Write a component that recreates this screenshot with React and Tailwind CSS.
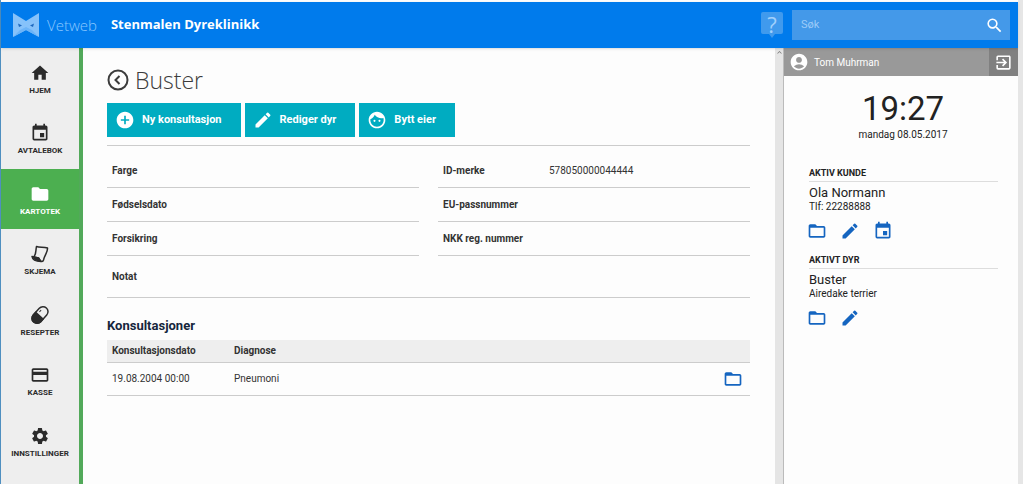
import {
  MdHome,
  MdEvent,
  MdFolder,
  MdFolderOpen,
  MdCreditCard,
  MdSettings,
  MdEdit,
  MdAddCircle,
  MdSearch,
  MdAccountCircle,
  MdExitToApp,
  MdKeyboardArrowUp,
} from 'react-icons/md';

function Logo() {
  return (
    <svg viewBox="0 0 26 24" className="h-6 w-[26px]">
      <path d="M0 0 L13 8 L26 0 V24 L13 17 L0 24 Z" fill="#86c2fa" />
      <path d="M0 24 L13 17 L26 24 L19 17 L13 14 L7 17 Z" fill="#6cb4f8" />
      <path d="M5 10.500 L9 12.500 L6 14 Z M21 10.500 L17 12.500 L20 14 Z" fill="#1d68bf" />
    </svg>
  );
}

function FormIcon({ size }) {
  return (
    <svg viewBox="0 0 20 20" width={size} height={size} fill="none" stroke="currentColor" strokeWidth="1.500" strokeLinejoin="round">
      <path d="M6.500 2.500 C9.500 4 13.500 2.500 17.500 4 C18 8 14.500 11 13.500 16 C13 18 11 18 10 16.500 L8.500 14 L3.500 13 C6.500 10.500 5.500 6.500 6.500 2.500 Z" />
      <path d="M2 12.500 L8.500 14 L11 17.500 C7 17.500 2.500 16 2 12.500 Z" fill="currentColor" />
    </svg>
  );
}

function PillIcon({ size }) {
  return (
    <svg viewBox="0 0 20 20" width={size} height={size} fill="none" stroke="currentColor" strokeWidth="1.500">
      <g transform="rotate(42 10 10)">
        <rect x="5" y="0.500" width="10" height="19" rx="5" />
        <path d="M5 11 H15 V14.500 A5 5 0 0 1 5 14.500 Z" fill="currentColor" />
        <path d="M7.500 8 V5.500" strokeWidth="1" />
      </g>
    </svg>
  );
}

function FaceIcon() {
  return (
    <svg viewBox="0 0 24 24" width="20" height="20" fill="currentColor">
      <circle cx="9" cy="13" r="1.250" />
      <circle cx="15" cy="13" r="1.250" />
      <path d="M12 2C6.480 2 2 6.480 2 12s4.480 10 10 10 10-4.480 10-10S17.520 2 12 2zm0 18c-4.410 0-8-3.590-8-8 0-.290.020-.580.050-.860 2.360-1.050 4.230-2.980 5.210-5.370C11.070 8.330 14.050 10 17.420 10c.780 0 1.530-.090 2.250-.260.210.710.330 1.470.330 2.260 0 4.410-3.590 8-8 8z" />
    </svg>
  );
}

const menu = [
  { label: 'HJEM', icon: MdHome },
  { label: 'AVTALEBOK', icon: MdEvent },
  { label: 'KARTOTEK', icon: MdFolder, active: true },
  { label: 'SKJEMA', icon: FormIcon },
  { label: 'RESEPTER', icon: PillIcon },
  { label: 'KASSE', icon: MdCreditCard },
  { label: 'INNSTILLINGER', icon: MdSettings },
];

function Header() {
  return (
    <header className="z-10 flex h-[46px] shrink-0 items-center bg-[#007bec] pl-3 pr-2 text-white shadow">
      <Logo />
      <span className="ml-2 font-['Open_Sans',sans-serif] text-[15px] font-light text-[#8cc8ff]">Vetweb</span>
      <span className="ml-3.5 font-['Open_Sans',sans-serif] text-[13px] font-bold">Stenmalen Dyreklinikk</span>
      <button type="button" aria-label="Hjelp" className="relative ml-auto flex h-[26px] w-[22px] justify-center text-[#a0d0fc]">
        <svg viewBox="0 0 22 26" className="absolute inset-0 h-[26px] w-[22px]">
          <path d="M2 0 H20 Q22 0 22 2 V20 Q22 22 20 22 H14 L11 26 L8 22 H2 Q0 22 0 20 V2 Q0 0 2 0 Z" fill="#409aed" />
        </svg>
        <span className="relative font-['Open_Sans',sans-serif] text-[22px] leading-6">?</span>
      </button>
      <form className="ml-[9px] flex h-[30px] w-[218px] items-center bg-[#4499e9] pl-[9px] pr-1.5" onSubmit={(e) => e.preventDefault()}>
        <input
          type="text"
          aria-label="Søk"
          placeholder="Søk"
          className="min-w-0 flex-1 bg-transparent text-[11px] outline-none placeholder:text-[#9dcbf8]"
        />
        <button type="submit" aria-label="Utfør søk"><MdSearch size={19} /></button>
      </form>
    </header>
  );
}

function Sidebar() {
  return (
    <nav className="w-[82px] shrink-0 border-r-4 border-[#52a95a] bg-[#eeeeee]">
      {menu.map(({ label, icon: Icon, active }) => (
        <a
          key={label}
          href="#"
          className={`flex h-[61px] flex-col items-center pt-[15px] text-[8px] leading-3 font-bold odd:h-[60px] ${
            active ? 'bg-[#4caf50] text-white' : 'text-[#2b2b2b]'
          }`}
        >
          <Icon size={20} />
          <span className="mt-0.5">{label}</span>
        </a>
      ))}
    </nav>
  );
}

function ActionButton({ icon, children }) {
  return (
    <button type="button" className="flex h-[34px] items-center gap-[7px] bg-[#00acc1] pl-2 pr-[19px] text-[11px] font-bold text-white">
      {icon}
      {children}
    </button>
  );
}

function Field({ label, value, className = 'h-[34px]' }) {
  return (
    <div className={`flex items-center border-b border-[#cccccc] px-[5px] ${className}`}>
      <dt className="w-[106px] shrink-0 font-bold">{label}</dt>
      <dd>{value}</dd>
    </div>
  );
}

function PatientCard() {
  return (
    <main className="min-w-0 flex-1 pl-6 pr-[25px] pt-[18px] text-[10px] text-[#333333]">
      <h1 className="flex h-7 items-center gap-1.5 font-['Open_Sans',sans-serif] text-[23px] font-light text-[#3c3c3c]">
        <a href="#" aria-label="Tilbake">
          <svg viewBox="0 0 22 22" className="size-[22px]" fill="none" stroke="currentColor" strokeWidth="2">
            <circle cx="11" cy="11" r="9.500" />
            <path d="M12.500 7 L8.500 11 L12.500 15" />
          </svg>
        </a>
        Buster
      </h1>
      <div className="mt-[9px] flex gap-1">
        <ActionButton icon={<MdAddCircle size={20} />}>Ny konsultasjon</ActionButton>
        <ActionButton icon={<MdEdit size={20} />}>Rediger dyr</ActionButton>
        <ActionButton icon={<FaceIcon />}>Bytt eier</ActionButton>
      </div>
      <dl className="mt-2 border-t border-[#cccccc]">
        <div className="grid grid-cols-2 gap-x-[19px] pt-2">
          <Field label="Farge" />
          <Field label="ID-merke" value="578050000044444" />
          <Field label="Fødselsdato" />
          <Field label="EU-passnummer" />
          <Field label="Forsikring" />
          <Field label="NKK reg. nummer" />
        </div>
        <Field label="Notat" className="h-[42px]" />
      </dl>
      <h2 className="mt-[18px] text-[13px] leading-5 font-bold text-[#16263c]">Konsultasjoner</h2>
      <table className="mt-1 w-full text-left">
        <thead>
          <tr className="h-[22px] border-b border-[#cccccc] bg-[#eeeeee]">
            <th scope="col" className="w-[122px] pl-[5px]">Konsultasjonsdato</th>
            <th scope="col" className="pl-[5px]">Diagnose</th>
            <th aria-label="Åpne" />
          </tr>
        </thead>
        <tbody>
          <tr className="h-[33px] border-b border-[#cccccc]">
            <td className="pl-[5px]">19.08.2004 00:00</td>
            <td className="pl-[5px]">Pneumoni</td>
            <td className="pr-[7px]">
              <button type="button" aria-label="Åpne konsultasjon" className="ml-auto block text-[#1565c0]">
                <MdFolderOpen size={20} />
              </button>
            </td>
          </tr>
        </tbody>
      </table>
    </main>
  );
}

function ActiveSection({ title, name, detail, children }) {
  return (
    <section className="mb-[11px]">
      <h2 className="border-b border-[#dddddd] text-[9px] leading-4 font-bold">{title}</h2>
      <p className="mt-0.5 text-[13px] leading-[17px]">{name}</p>
      <p className="text-[10px] leading-3">{detail}</p>
      <div className="-ml-0.5 mt-2 flex gap-[13px] text-[#1565c0]">{children}</div>
    </section>
  );
}

function UserPanel() {
  return (
    <aside className="w-[234px] shrink-0 bg-[#fdfdfd] text-[#222222]">
      <div className="flex h-7 items-center bg-[#999999] pl-[5px] text-white">
        <MdAccountCircle size={20} />
        <span className="ml-[5px] text-[10px]">Tom Muhrman</span>
        <button type="button" aria-label="Logg ut" className="ml-auto flex h-full w-[29px] items-center justify-center bg-[#808080]">
          <MdExitToApp size={19} />
        </button>
      </div>
      <div className="mt-[13px] pl-1 text-center">
        <div className="text-[33px] leading-10">19:27</div>
        <div className="text-[10px] leading-3">mandag 08.05.2017</div>
      </div>
      <div className="mt-6 pl-[25px] pr-5">
        <ActiveSection title="AKTIV KUNDE" name="Ola Normann" detail="Tlf: 22288888">
          <button type="button" aria-label="Åpne kunde"><MdFolderOpen size={20} /></button>
          <button type="button" aria-label="Rediger kunde"><MdEdit size={20} /></button>
          <button type="button" aria-label="Ny avtale"><MdEvent size={20} /></button>
        </ActiveSection>
        <ActiveSection title="AKTIVT DYR" name="Buster" detail="Airedake terrier">
          <button type="button" aria-label="Åpne dyr"><MdFolderOpen size={20} /></button>
          <button type="button" aria-label="Rediger dyr"><MdEdit size={20} /></button>
        </ActiveSection>
      </div>
    </aside>
  );
}

export default function App() {
  return (
    <div className="flex min-h-screen bg-[#e6e6e6] pr-[5px] font-[Roboto,sans-serif]">
      <div className="flex min-w-0 flex-1 flex-col border-l border-[#4f8fc0] bg-[#fdfdfd] pt-0.5">
        <Header />
        <div className="flex flex-1">
          <Sidebar />
          <PatientCard />
          <div className="w-[9px] shrink-0 border-r border-[#bbbbbb] bg-[#e5e5e5] text-[#777777]">
            <MdKeyboardArrowUp size={9} />
          </div>
          <UserPanel />
        </div>
      </div>
    </div>
  );
}
